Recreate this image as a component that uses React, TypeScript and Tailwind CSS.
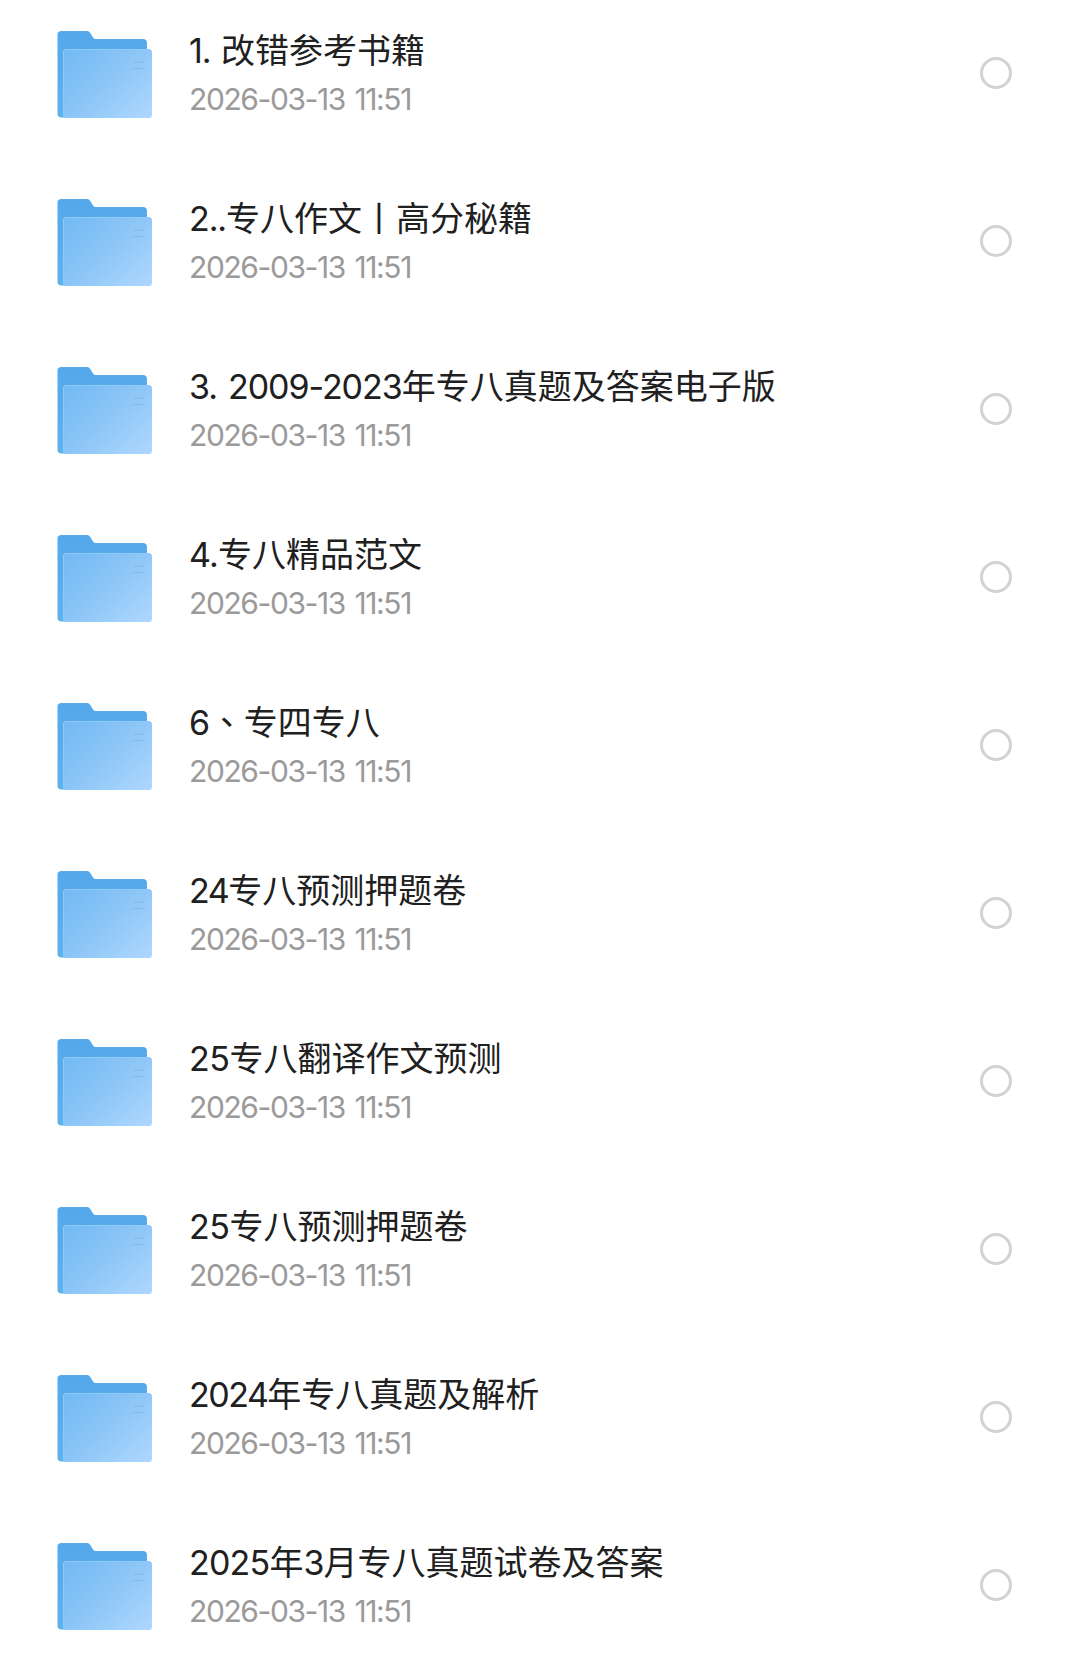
import { Fragment } from 'react';

const folders = [
  { name: '1. 改错参考书籍', date: '2026-03-13 11:51', tracking: 'tracking-[-1.2px]' },
  { name: '2..专八作文丨高分秘籍', date: '2026-03-13 11:51', tracking: 'tracking-[-1.1px]' },
  { name: '3. 2009-2023年专八真题及答案电子版', date: '2026-03-13 11:51', tracking: 'tracking-[-1.05px]' },
  { name: '4.专八精品范文', date: '2026-03-13 11:51', tracking: 'tracking-[-0.8px]' },
  { name: '6、专四专八', date: '2026-03-13 11:51', tracking: 'tracking-[-0.3px]' },
  { name: '24专八预测押题卷', date: '2026-03-13 11:51', tracking: 'tracking-[-1.5px]' },
  { name: '25专八翻译作文预测', date: '2026-03-13 11:51', tracking: 'tracking-[-0.5px]' },
  { name: '25专八预测押题卷', date: '2026-03-13 11:51', tracking: 'tracking-[-0.5px]' },
  { name: '2024年专八真题及解析', date: '2026-03-13 11:51', tracking: 'tracking-[-1.5px]' },
  { name: '2025年3月专八真题试卷及答案', date: '2026-03-13 11:51', tracking: 'tracking-[-0.8px]' },
];

function FolderIcon() {
  return (
    <svg viewBox="0 0 96 88" className="h-[88px] w-[96px] shrink-0">
      <defs>
        <linearGradient id="folder-back" x1="0" y1="0" x2="0" y2="1">
          <stop offset="0" stopColor="#54a9ea" />
          <stop offset="1" stopColor="#5fb0ee" />
        </linearGradient>
        <linearGradient id="folder-front" x1="0" y1="0.1" x2="1" y2="0.9">
          <stop offset="0" stopColor="#74baf3" />
          <stop offset="0.5" stopColor="#8dc6f7" />
          <stop offset="1" stopColor="#acd6fd" />
        </linearGradient>
      </defs>
      <path
        d="M4 1H29.5c2 0 3 .8 4 2.4l2.6 4c.9 1.3 1.6 1.6 3.2 1.6H86c2.5 0 4 1.5 4 4V60H16V87.5H4c-2 0-3.500-1.500-3.500-3.500V4.500C.5 2.500 2 1 4 1Z"
        fill="url(#folder-back)"
      />
      <rect x="6" y="19" width="89" height="69" rx="3.5" fill="url(#folder-front)" />
      <path d="M6.5 84V22c0-1.700 1-2.500 2.500-2.500H92" fill="none" stroke="#92caf6" strokeWidth="1" />
      <path d="M77.5 32H87M75.5 38.500H87.500" stroke="#76b2e8" strokeWidth="1.6" opacity="0.5" />
    </svg>
  );
}

function FolderName({ name, tracking }: { name: string; tracking: string }) {
  const parts = name.split(/([0-9. -]+|、)/).filter(Boolean);

  return (
    <div className="whitespace-pre text-[34px] leading-[44px] text-[#202020] [word-spacing:2.5px]">
      {parts.map((part, i) => (
        <Fragment key={i}>
          {part === '、' ? (
            // the enumeration comma sits in the middle of its box
            <span lang="zh-TW" className="font-['Noto_Sans_CJK_TC',sans-serif]">{part}</span>
          ) : /^[0-9. -]+$/.test(part) ? (
            <span className={tracking}>{part}</span>
          ) : (
            <span className="font-['Noto_Sans_CJK_SC',sans-serif]">{part}</span>
          )}
        </Fragment>
      ))}
    </div>
  );
}

export default function App() {
  return (
    <main className="h-[1655px] w-[1080px] overflow-hidden bg-white font-['Inter','Noto_Sans_CJK_SC',sans-serif]">
      {folders.map((folder) => (
        <div key={folder.name} className="flex h-[168px] items-start pr-[68px] pl-[57px] pt-[30px]">
          <FolderIcon />
          <div className="-mt-[3px] ml-[36px] grow">
            <FolderName name={folder.name} tracking={folder.tracking} />
            <div className="mt-[6px] whitespace-pre text-[30px] leading-[40px] tracking-[-1.4px] text-[#9a9a9a] [word-spacing:2.5px]">{folder.date}</div>
          </div>
          <div className="mt-[27px] h-8 w-8 shrink-0 rounded-full border-3 border-[#d2d2d2]" />
        </div>
      ))}
    </main>
  );
}
